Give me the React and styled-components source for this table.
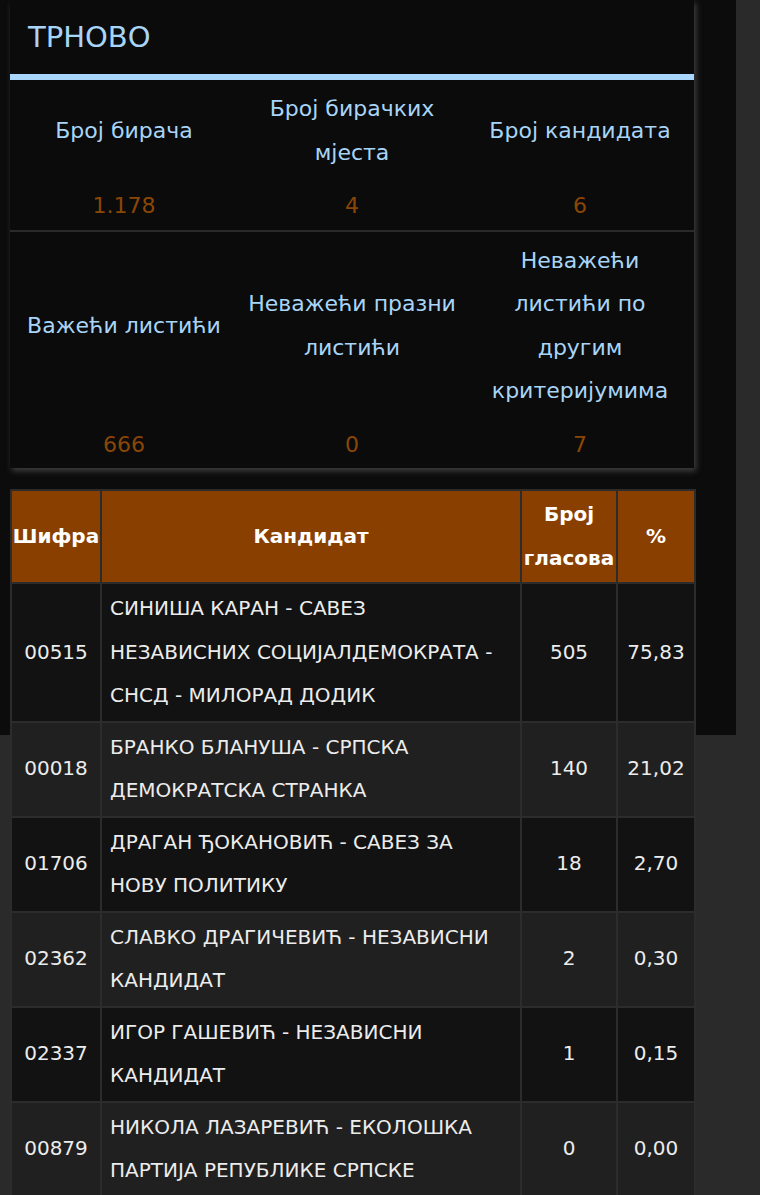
import styled, { createGlobalStyle } from 'styled-components'

const GlobalStyle = createGlobalStyle`
  html, body {
    margin: 0;
    padding: 0;
  }
  body {
    background: linear-gradient(#0c0c0c, #0c0c0c) 0 0 / 736px 735px no-repeat, #2a2a2a;
    font-family: "DejaVu Sans", "Liberation Sans", sans-serif;
    min-height: 1195px;
  }
`;

const Page = styled.div`
  width: 736px;
  padding-left: 10px;
  box-sizing: border-box;
`;

const Panel = styled.section`
  width: 684px;
  background: #0b0b0b;
  box-shadow: 2px 3px 6px rgba(70, 70, 70, 0.9);
`;

const Title = styled.h1`
  margin: 0;
  height: 74px;
  display: flex;
  align-items: center;
  padding-left: 18px;
  font-size: 29px;
  font-weight: normal;
  color: #a8d5f7;
  border-bottom: 6px solid #a9d6fc;
`;

const Stats = styled.div`
  display: grid;
  grid-template-columns: repeat(3, 1fr);
  row-gap: 10px;
  padding: 7px 0 2px;
  border-top: ${p => (p.$divided ? '2px solid #2a2a2a' : 'none')};
`;

const Label = styled.div`
  display: flex;
  align-items: center;
  justify-content: center;
  text-align: center;
  padding: 0 8px;
  font-size: 22px;
  line-height: 43.5px;
  color: #a8d5f7;
`;

const Value = styled.div`
  text-align: center;
  font-size: 22px;
  line-height: 43.5px;
  color: #8a4606;
`;

const Table = styled.table`
  margin-top: 21px;
  width: 686px;
  border-collapse: separate;
  border-spacing: 2px;
  background: #2c2c2c;
  color: #ececec;
  font-size: 20px;
`;

const Th = styled.th`
  background: #893f00;
  color: #ffffff;
  font-weight: bold;
  line-height: 43.5px;
  padding: 2px 0;
  width: ${p => p.$w};
`;

const Row = styled.tr`
  background: ${p => (p.$alt ? '#202020' : '#121212')};
`;

const Td = styled.td`
  line-height: 43.5px;
  padding: ${p => (p.$left ? '3px 12px 3px 8px' : '3px 0')};
  text-align: ${p => (p.$left ? 'left' : 'center')};
  vertical-align: middle;
`;

const topStats = [
  ['Број бирача', '1.178'],
  ['Број бирачких мјеста', '4'],
  ['Број кандидата', '6'],
];

const bottomStats = [
  ['Важећи листићи', '666'],
  ['Неважећи празни листићи', '0'],
  ['Неважећи листићи по другим критеријумима', '7'],
];

const rows = [
  ['00515', 'СИНИША КАРАН - САВЕЗ НЕЗАВИСНИХ СОЦИЈАЛДЕМОКРАТА - СНСД - МИЛОРАД ДОДИК', '505', '75,83'],
  ['00018', 'БРАНКО БЛАНУША - СРПСКА ДЕМОКРАТСКА СТРАНКА', '140', '21,02'],
  ['01706', 'ДРАГАН ЂОКАНОВИЋ - САВЕЗ ЗА НОВУ ПОЛИТИКУ', '18', '2,70'],
  ['02362', 'СЛАВКО ДРАГИЧЕВИЋ - НЕЗАВИСНИ КАНДИДАТ', '2', '0,30'],
  ['02337', 'ИГОР ГАШЕВИЋ - НЕЗАВИСНИ КАНДИДАТ', '1', '0,15'],
  ['00879', 'НИКОЛА ЛАЗАРЕВИЋ - ЕКОЛОШКА ПАРТИЈА РЕПУБЛИКЕ СРПСКЕ', '0', '0,00'],
];

const StatBlock = ({ items, divided }) => (
  <Stats $divided={divided}>
    {items.map(([label]) => <Label key={label}>{label}</Label>)}
    {items.map(([label, value]) => <Value key={label}>{value}</Value>)}
  </Stats>
);

const App = () => (
  <>
    <GlobalStyle />
    <Page>
      <Panel>
        <Title>ТРНОВО</Title>
        <StatBlock items={topStats} />
        <StatBlock items={bottomStats} divided />
      </Panel>
      <Table>
        <thead>
          <tr>
            <Th $w="88px">Шифра</Th>
            <Th>Кандидат</Th>
            <Th $w="94px">Број гласова</Th>
            <Th $w="76px">%</Th>
          </tr>
        </thead>
        <tbody>
          {rows.map(([code, name, votes, pct], i) => (
            <Row key={code} $alt={i % 2 === 1}>
              <Td>{code}</Td>
              <Td $left>{name}</Td>
              <Td>{votes}</Td>
              <Td>{pct}</Td>
            </Row>
          ))}
        </tbody>
      </Table>
    </Page>
  </>
)

export default App
